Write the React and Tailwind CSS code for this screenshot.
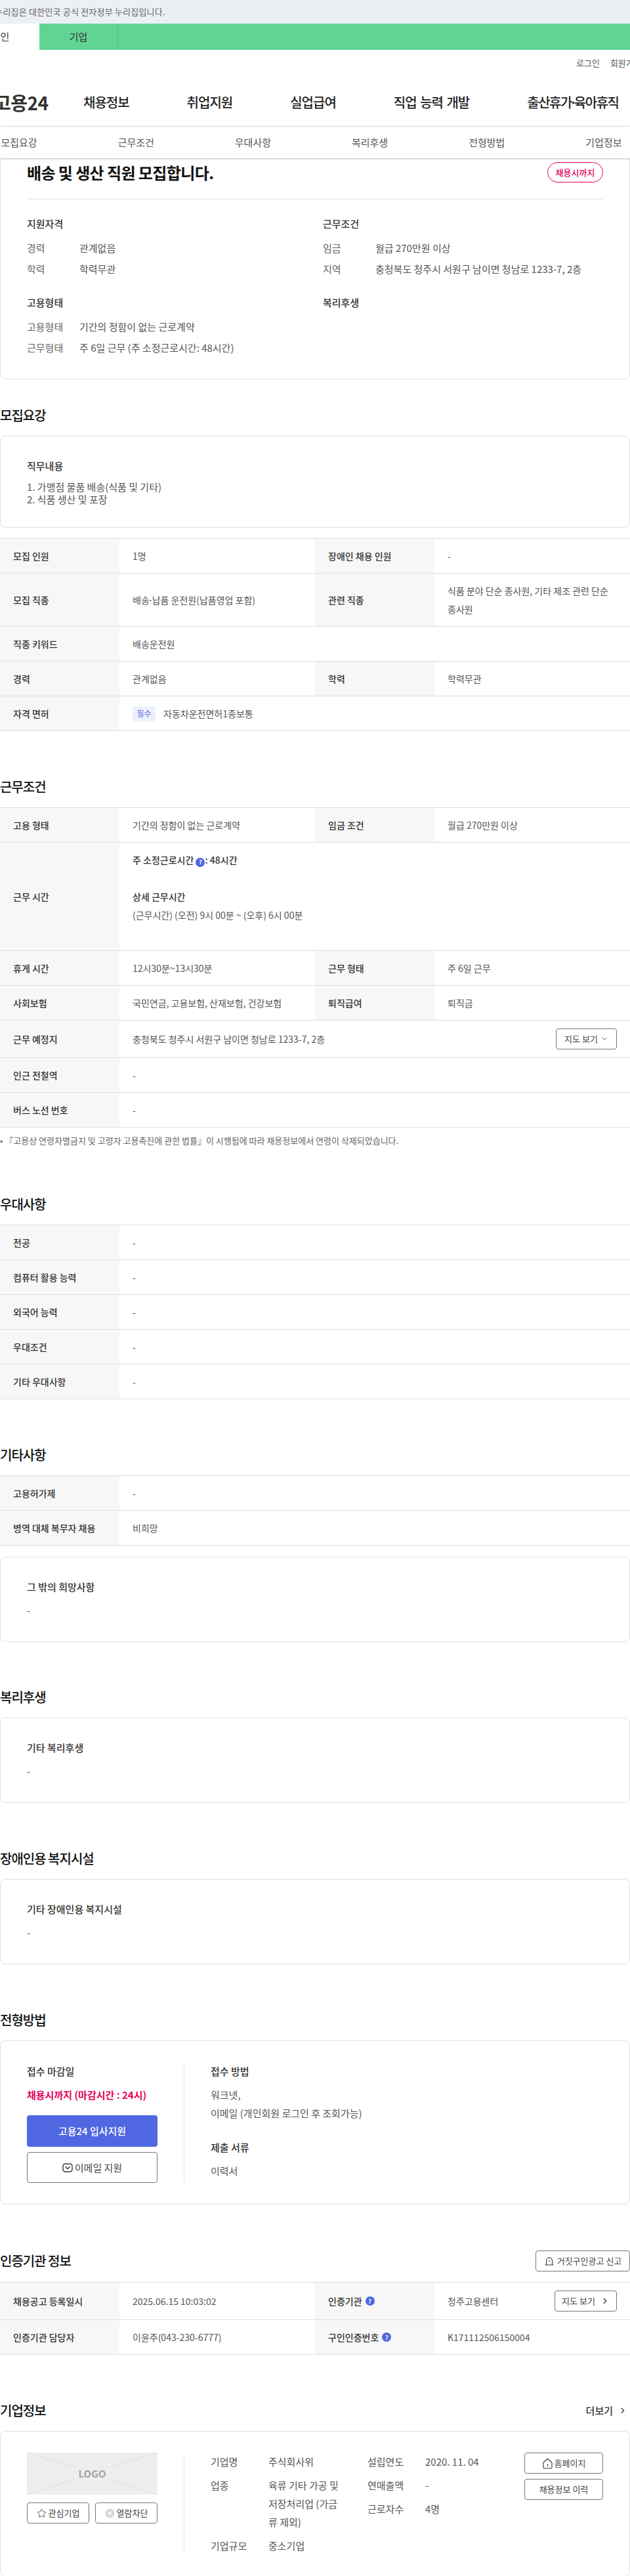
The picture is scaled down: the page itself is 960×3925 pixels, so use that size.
import React from 'react'
import { ChevronDown, ChevronRight, Star } from 'lucide-react'

const HelpDot = ({ className = '' }) => (
  <span className={`inline-flex w-[14px] h-[14px] rounded-full bg-[#4f67e0] text-white text-[9px] font-bold items-center justify-center align-[-1px] leading-none ${className}`}>?</span>
)

const MidDot = ({ className = '-mx-[2px]' }) => <span className={className}>·</span>

const Heading = ({ children, right, className = 'mb-[15px]' }) => (
  <div className={`flex items-center justify-between h-8 ${className}`}>
    <h2 className="text-[20px] leading-8 font-medium tracking-[-1px] text-[#111]">{children}</h2>
    {right}
  </div>
)

const Section = ({ title, right, className = 'mt-[69px]', headClass, children }) => (
  <section className={className}>
    <Heading right={right} className={headClass}>{title}</Heading>
    {children}
  </section>
)

const Card = ({ className = '', children }) => (
  <div className={`border border-[#dfdfdf] rounded-lg bg-white ${className}`}>{children}</div>
)

const Label = ({ children }) => (
  <div className="bg-[#f7f7f7] px-5 py-3 flex items-center font-medium text-[#333]">{children}</div>
)

const Value = ({ wide, children }) => (
  <div className={`px-5 py-3 flex items-center text-[#555] ${wide ? 'col-span-3' : ''}`}>{children}</div>
)

const Row = ({ cells }) => (
  <div className="grid grid-cols-[182px_298px_182px_298px] border-b border-[#dedede] text-[14px] leading-7">
    {cells.map((c, i) => (
      <React.Fragment key={i}>
        <Label>{c[0]}</Label>
        <Value wide={cells.length === 1}>{c[1]}</Value>
      </React.Fragment>
    ))}
  </div>
)

const Table = ({ children }) => <div className="border-t border-[#dedede]">{children}</div>

const TextCard = ({ title, text, className = '' }) => (
  <Card className={`px-10 pt-[31px] pb-[33px] text-[15px] leading-7 ${className}`}>
    <p className="font-medium text-[#333] mb-2">{title}</p>
    <p className="text-[#555]">{text}</p>
  </Card>
)

const OutlineBtn = ({ className = '', children }) => (
  <button className={`h-8 border border-[#767676] rounded-[4px] bg-white flex items-center justify-center text-[13px] text-[#444] whitespace-nowrap ${className}`}>
    {children}
  </button>
)

const DashRows = (labels) => labels.map((l) => <Row key={l} cells={[[l, '-']]} />)

const gnb = ['채용정보', '취업지원', '실업급여', '직업 능력 개발', <span className="tracking-[-1.5px]">출산휴가<MidDot className="-mx-[3px]" />육아휴직</span>]
const tabs = ['모집요강', '근무조건', '우대사항', '복리후생', '전형방법', '기업정보']

export default function App() {
  return (
    <div className="w-[960px] h-[3925px] overflow-hidden bg-white text-[#333] font-['Noto_Sans_CJK_KR','Noto_Sans',sans-serif]">
      {/* top notice */}
      <div className="h-9 bg-[#eceff4] flex items-center text-[13px] tracking-[0.2px] text-[#666] whitespace-nowrap">
        <span className="-ml-[23px]">이 누리집은 대한민국 공식 전자정부 누리집입니다.</span>
      </div>
      <div className="h-10 bg-[#60d492] flex text-[15px] text-[#333]">
        <div className="-ml-[59px] w-[119px] bg-white flex items-center justify-center shrink-0">개인</div>
        <div className="w-[120px] border-r border-[#55c484] flex items-center justify-center">기업</div>
      </div>

      {/* header */}
      <header className="h-[117px] border-b border-[#e6e6e6]">
        <div className="pl-[878px] pt-[10px] flex gap-4 text-[13px] leading-5 text-[#555] whitespace-nowrap">
          <span>로그인</span>
          <span>회원가입</span>
        </div>
        <div className="mt-[32px] flex items-center h-9 whitespace-nowrap">
          <div className="-ml-[9px] w-[83px] text-[28px] font-bold tracking-[-0.5px] text-[#333] shrink-0">고용24</div>
          <nav className="ml-[53px] flex gap-[88px] text-[20px] font-medium tracking-[-1px] [word-spacing:2px] text-[#222]">
            {gnb.map((g, i) => <span key={i}>{g}</span>)}
          </nav>
        </div>
      </header>
      <div className="relative z-10 h-12 bg-white shadow-[0_1px_3px_rgba(0,0,0,0.25)]">
        <div className="-ml-[60px] w-[1069px] h-12 grid grid-cols-6 items-center text-center text-[15px] text-[#555]">
          {tabs.map((t) => <span key={t}>{t}</span>)}
        </div>
      </div>

      {/* summary card */}
      <div className="border-x border-b border-[#dfdfdf] rounded-b-lg px-10 pt-[6px] pb-[33px]">
        <div className="flex items-center justify-between h-[31px]">
          <h1 className="text-[24px] font-bold tracking-[-0.6px] text-[#111]">배송 및 생산 직원 모집합니다.</h1>
          <span className="w-[85px] h-[31px] border border-[#e6005a] rounded-full flex items-center justify-center text-[13px] font-medium text-[#e6005a]">채용시까지</span>
        </div>
        <div className="mt-[25px] pt-[23px] border-t border-[#e6e6e6] grid grid-cols-[451px_1fr] text-[15px] leading-7">
          <div>
            <h3 className="font-medium text-[#333]">지원자격</h3>
            <dl className="mt-[9px] grid grid-cols-[80px_1fr] gap-y-1 text-[#555]">
              <dt className="text-[#666]">경력</dt><dd>관계없음</dd>
              <dt className="text-[#666]">학력</dt><dd>학력무관</dd>
            </dl>
          </div>
          <div>
            <h3 className="font-medium text-[#333]">근무조건</h3>
            <dl className="mt-[9px] grid grid-cols-[80px_1fr] gap-y-1 text-[#555]">
              <dt className="text-[#666]">임금</dt><dd>월급 270만원 이상</dd>
              <dt className="text-[#666]">지역</dt><dd className="whitespace-nowrap">충청북도 청주시 서원구 남이면 청남로 1233-7, 2층</dd>
            </dl>
          </div>
          <div className="mt-[23px]">
            <h3 className="font-medium text-[#333]">고용형태</h3>
            <dl className="mt-[9px] grid grid-cols-[80px_1fr] gap-y-1 text-[#555]">
              <dt className="text-[#666]">고용형태</dt><dd>기간의 정함이 없는 근로계약</dd>
              <dt className="text-[#666]">근무형태</dt><dd>주 6일 근무 (주 소정근로시간: 48시간)</dd>
            </dl>
          </div>
          <div className="mt-[23px]">
            <h3 className="font-medium text-[#333]">복리후생</h3>
          </div>
        </div>
      </div>

      <Section title="모집요강" className="mt-[39px]">
        <Card className="px-10 pt-[31px] pb-[33px] text-[15px] leading-7">
          <p className="font-medium text-[#333] mb-2">직무내용</p>
          <p className="leading-[19px] text-[#555]">1. 가맹점 물품 배송(식품 및 기타)<br />2. 식품 생산 및 포장</p>
        </Card>
        <div className="mt-4">
          <Table>
            <Row cells={[['모집 인원', '1명'], ['장애인 채용 인원', '-']]} />
            <Row cells={[['모집 직종', <span>배송<MidDot />납품 운전원(납품영업 포함)</span>], ['관련 직종', '식품 분야 단순 종사원, 기타 제조 관련 단순 종사원']]} />
            <Row cells={[['직종 키워드', '배송운전원']]} />
            <Row cells={[['경력', '관계없음'], ['학력', '학력무관']]} />
            <Row cells={[['자격 면허', (
              <span className="flex items-center gap-3">
                <span className="w-[35px] h-[23px] rounded-[4px] bg-[#eef0fd] text-[#5a70e2] text-[12px] flex items-center justify-center">필수</span>
                자동차운전면허1종보통
              </span>
            )]]} />
          </Table>
        </div>
      </Section>

      <Section title="근무조건">
        <Table>
          <Row cells={[['고용 형태', '기간의 정함이 없는 근로계약'], ['임금 조건', '월급 270만원 이상']]} />
          <Row cells={[['근무 시간', (
            <div>
              <p className="font-medium text-[#333]">주 소정근로시간 <HelpDot />: 48시간</p>
              <p>&nbsp;</p>
              <p className="font-medium text-[#333]">상세 근무시간</p>
              <p>(근무시간) (오전) 9시 00분 ~ (오후) 6시 00분</p>
              <p>&nbsp;</p>
            </div>
          )]]} />
          <Row cells={[['휴게 시간', '12시30분~13시30분'], ['근무 형태', '주 6일 근무']]} />
          <Row cells={[['사회보험', '국민연금, 고용보험, 산재보험, 건강보험'], ['퇴직급여', '퇴직금']]} />
          <Row cells={[['근무 예정지', (
            <div className="w-full flex items-center justify-between">
              충청북도 청주시 서원구 남이면 청남로 1233-7, 2층
              <OutlineBtn className="w-[93px] gap-1">지도 보기 <ChevronDown size={12} /></OutlineBtn>
            </div>
          )]]} />
          <Row cells={[['인근 전철역', '-']]} />
          <Row cells={[['버스 노선 번호', '-']]} />
        </Table>
        <p className="mt-[11px] text-[13px] leading-[18px] text-[#666]">• 『고용상 연령차별금지 및 고령자 고용촉진에 관한 법률』이 시행됨에 따라 채용정보에서 연령이 삭제되었습니다.</p>
      </Section>

      <Section title="우대사항" className="mt-[72px]">
        <Table>{DashRows(['전공', '컴퓨터 활용 능력', '외국어 능력', '우대조건', '기타 우대사항'])}</Table>
      </Section>

      <Section title="기타사항">
        <Table>
          <Row cells={[['고용허가제', '-']]} />
          <Row cells={[['병역 대체 복무자 채용', '비희망']]} />
        </Table>
        <TextCard className="mt-[17px]" title="그 밖의 희망사항" text="-" />
      </Section>

      <Section title="복리후생" className="mt-[68px]">
        <TextCard title="기타 복리후생" text="-" />
      </Section>

      <Section title="장애인용 복지시설">
        <TextCard title="기타 장애인용 복지시설" text="-" />
      </Section>

      <Section title="전형방법">
        <Card className="p-8 pl-10 flex text-[15px] leading-7">
          <div className="w-[240px] pr-10 border-r border-[#e6e6e6] shrink-0">
            <p className="font-medium text-[#333]">접수 마감일</p>
            <p className="mt-2 font-bold text-[#e6005a] whitespace-nowrap">채용시까지 (마감시간 : 24시)</p>
            <button className="mt-[17px] w-full h-12 rounded-[4px] bg-[#4f67e0] text-white font-medium">고용24 입사지원</button>
            <button className="mt-2 w-full h-[47px] rounded-[4px] border border-[#767676] text-[#444] flex items-center justify-center gap-[3px]">
              <svg width="16" height="16" viewBox="0 0 16 16" fill="none" stroke="#333" strokeWidth="1.4" strokeLinecap="round" strokeLinejoin="round">
                <rect x="1" y="2" width="14" height="12" rx="3.5" />
                <path d="M4.8 6.5 8 9.4l3.2-2.9" />
              </svg>
              이메일 지원
            </button>
          </div>
          <div className="pl-10">
            <p className="font-medium text-[#333]">접수 방법</p>
            <p className="mt-2 text-[#555]">워크넷,<br />이메일 (개인회원 로그인 후 조회가능)</p>
            <p className="mt-6 font-medium text-[#333]">제출 서류</p>
            <p className="mt-2 text-[#555]">이력서</p>
          </div>
        </Card>
      </Section>

      <Section
        title="인증기관 정보"
        className="mt-[70px]"
        headClass="mb-4"
        right={
          <OutlineBtn className="w-[144px] gap-1">
            <svg width="16" height="16" viewBox="0 0 16 16" fill="none" stroke="#333" strokeWidth="1.1" strokeLinecap="round" strokeLinejoin="round">
              <path d="M3.5 14V7.5a4.5 4.5 0 0 1 9 0V14M2 14h12" />
              <path d="M8 7v2" />
            </svg>
            거짓구인광고 신고
          </OutlineBtn>
        }
      >
        <Table>
          <Row cells={[['채용공고 등록일시', '2025.06.15 10:03:02'], [
            <span className="flex items-center gap-[5px]">인증기관 <HelpDot /></span>,
            <div className="w-full flex items-center justify-between">
              청주고용센터
              <OutlineBtn className="w-[95px] gap-2">지도 보기 <ChevronRight size={14} strokeWidth={2.5} /></OutlineBtn>
            </div>,
          ]]} />
          <Row cells={[['인증기관 담당자', '이윤주(043-230-6777)'], [
            <span className="flex items-center gap-[5px]">구인인증번호 <HelpDot /></span>,
            'K171112506150004',
          ]]} />
        </Table>
      </Section>

      <Section
        title="기업정보"
        right={
          <span className="flex items-center gap-2 pr-1 text-[15px] font-medium text-[#333]">더보기 <ChevronRight size={14} /></span>
        }
      >
        <Card className="p-8 pl-10 pr-10 flex text-[15px] leading-7">
          <div className="w-[240px] pr-10 border-r border-[#e6e6e6] shrink-0">
            <div className="relative h-16 bg-[#eeeeee] flex items-center justify-center">
              <svg className="absolute inset-0" width="199" height="64" viewBox="0 0 199 64" stroke="#dcdcdc" fill="none">
                <path d="M0 0 72 22M199 0 127 22M0 64 72 41M199 64 127 41" />
              </svg>
              <span className="relative text-[15px] font-bold text-[#a3a3a3]">LOGO</span>
            </div>
            <div className="mt-3 flex justify-between">
              <OutlineBtn className="w-[95px] gap-[3px]"><Star size={15} strokeWidth={1.4} />관심기업</OutlineBtn>
              <OutlineBtn className="w-[95px] gap-[3px]">
                <svg width="15" height="15" viewBox="0 0 15 15">
                  <circle cx="7.5" cy="7.5" r="7" fill="#d9d9d9" />
                  <path d="M5 5l5 5M10 5l-5 5" stroke="#fff" strokeWidth="1.4" />
                </svg>
                열람차단
              </OutlineBtn>
            </div>
          </div>
          <div className="pl-10 w-[279px] shrink-0 grid grid-cols-[88px_111px] gap-y-2 content-start text-[#555]">
            <span>기업명</span><span>주식회사위</span>
            <span>업종</span><span className="break-all">육류 기타 가공 및 저장처리업 (가금류 제외)</span>
            <span>기업규모</span><span>중소기업</span>
          </div>
          <div className="w-[239px] shrink-0 grid grid-cols-[88px_1fr] gap-y-2 content-start text-[#555]">
            <span>설립연도</span><span>2020. 11. 04</span>
            <span>연매출액</span><span>-</span>
            <span>근로자수</span><span>4명</span>
          </div>
          <div className="flex-1 flex flex-col gap-2">
            <OutlineBtn className="w-full gap-[2px]">
              <svg width="17" height="17" viewBox="0 0 17 17" fill="none" stroke="#333" strokeWidth="1.1" strokeLinejoin="round" strokeLinecap="round">
                <path d="M8.5 1.5 15 7v7.5a1.5 1.5 0 0 1-1.5 1.5h-10A1.5 1.5 0 0 1 2 14.5V7z" />
                <path d="M8.5 9.5v3" />
              </svg>
              홈페이지
            </OutlineBtn>
            <OutlineBtn className="w-full">채용정보 이력</OutlineBtn>
          </div>
        </Card>
      </Section>
    </div>
  )
}
